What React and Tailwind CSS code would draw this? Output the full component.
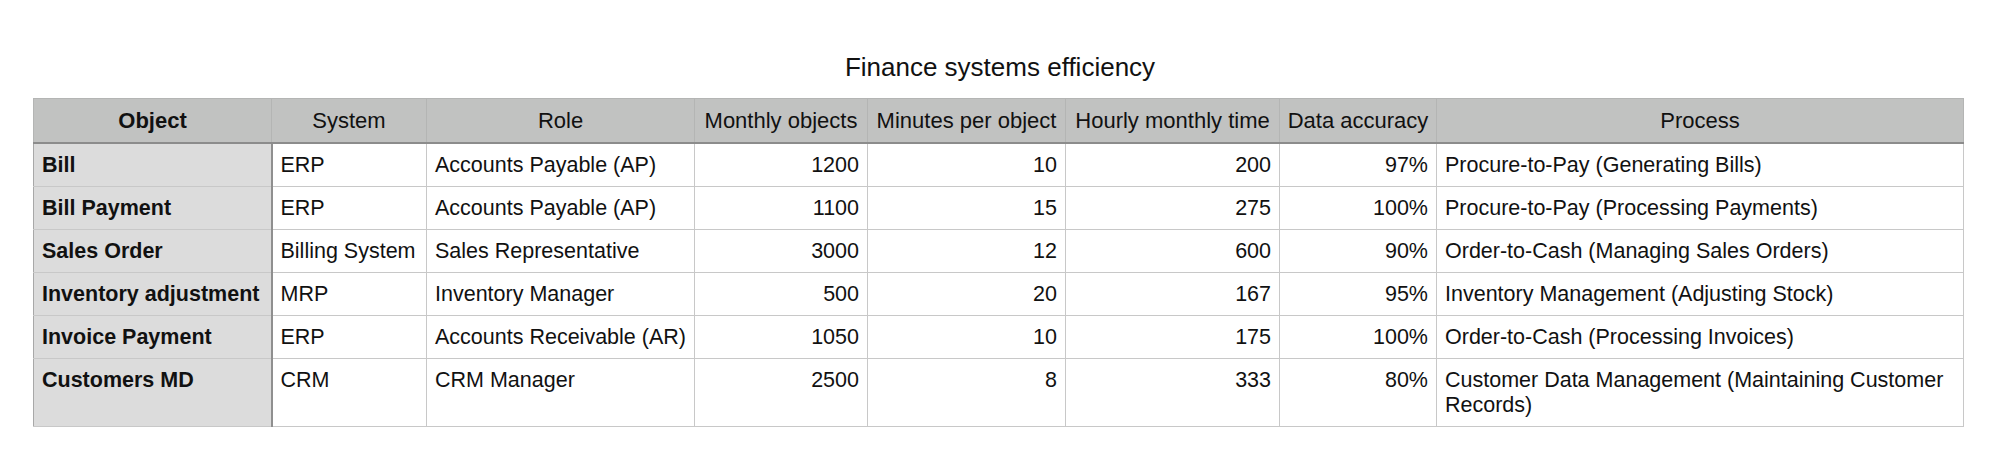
const columns = [
  { label: 'Object', width: 'w-[238px]' },
  { label: 'System', width: 'w-[155px]' },
  { label: 'Role', width: 'w-[268px]' },
  { label: 'Monthly objects', width: 'w-[173px]' },
  { label: 'Minutes per object', width: 'w-[198px]' },
  { label: 'Hourly monthly time', width: 'w-[214px]' },
  { label: 'Data accuracy', width: 'w-[157px]' },
  { label: 'Process', width: 'w-[527px]' },
];

const rows = [
  ['Bill', 'ERP', 'Accounts Payable (AP)', 1200, 10, 200, '97%', 'Procure-to-Pay (Generating Bills)'],
  ['Bill Payment', 'ERP', 'Accounts Payable (AP)', 1100, 15, 275, '100%', 'Procure-to-Pay (Processing Payments)'],
  ['Sales Order', 'Billing System', 'Sales Representative', 3000, 12, 600, '90%', 'Order-to-Cash (Managing Sales Orders)'],
  ['Inventory adjustment', 'MRP', 'Inventory Manager', 500, 20, 167, '95%', 'Inventory Management (Adjusting Stock)'],
  ['Invoice Payment', 'ERP', 'Accounts Receivable (AR)', 1050, 10, 175, '100%', 'Order-to-Cash (Processing Invoices)'],
  ['Customers MD', 'CRM', 'CRM Manager', 2500, 8, 333, '80%', 'Customer Data Management (Maintaining Customer Records)'],
];

// numeric columns sit to the right
const rightAligned = [3, 4, 5, 6];

export default function App() {
  return (
    <div
      className="w-[2000px] h-[461px] bg-white px-[33px] pt-[52px] text-[#111]"
      style={{ fontFamily: '"Liberation Sans", Arial, sans-serif' }}
    >
      <h1 className="text-center text-[26px] leading-[30px] mb-[16px]">Finance systems efficiency</h1>

      <table className="table-fixed border-collapse w-[1930px] text-[21.5px] leading-[25px]">
        <colgroup>
          {columns.map((c) => (
            <col key={c.label} className={c.width} />
          ))}
        </colgroup>
        <thead>
          <tr className="bg-[#c1c2c1]">
            {columns.map((c, i) => (
              <th
                key={c.label}
                className={
                  'h-[44px] px-1 text-center align-middle text-[22px] whitespace-nowrap border border-[#b4b5b4] border-b-2 border-b-[#8c8c8c] ' +
                  (i === 0 ? 'font-bold' : 'font-normal')
                }
              >
                {c.label}
              </th>
            ))}
          </tr>
        </thead>
        <tbody>
          {rows.map((row) => (
            <tr key={row[0]}>
              {row.map((cell, i) => (
                <td
                  key={i}
                  className={
                    'px-2 pt-[9px] pb-[8px] align-top border border-[#c8c8c8] ' +
                    (i === 0 ? 'bg-[#dcdcdc] font-bold border-r-2 border-r-[#8f8f8f] border-l-[#a8a8a8] ' : 'bg-white ') +
                    (rightAligned.includes(i) ? 'text-right' : 'text-left')
                  }
                >
                  {cell}
                </td>
              ))}
            </tr>
          ))}
        </tbody>
      </table>
    </div>
  );
}
